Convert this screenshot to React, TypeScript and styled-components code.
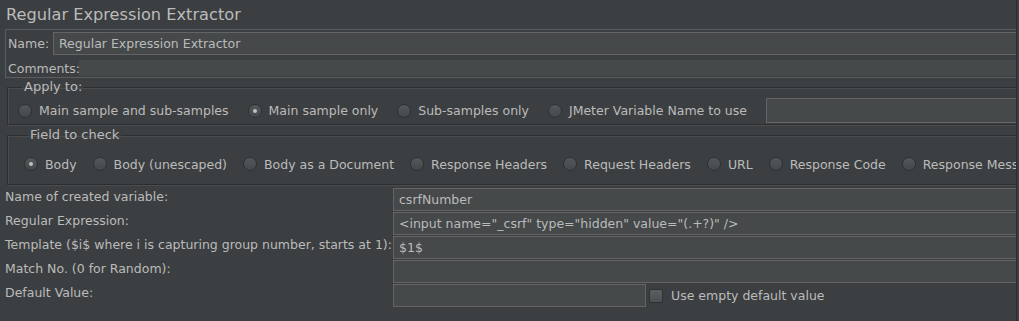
import React, { FC } from "react";
import styled, { createGlobalStyle } from "styled-components";

const GlobalStyle = createGlobalStyle`
  html, body {
    margin: 0;
    padding: 0;
    background: #3c3f41;
    overflow: hidden;
  }
  body {
    font-family: "DejaVu Sans", "Liberation Sans", sans-serif;
    font-size: 12.5px;
    color: #bbbbbb;
  }
`;

const Panel = styled.div`
  width: 1016px;
  height: 321px;
  overflow: hidden;
  border-right: 1px solid #2b2b2b;
`;

const Inner = styled.div`
  width: 1060px;
  padding-left: 5px;
  box-sizing: border-box;
`;

const Title = styled.div`
  height: 29px;
  line-height: 29px;
  font-size: 16.2px;
  padding-left: 1px;
  color: #bbbbbb;
`;

const NameBox = styled.div`
  border: 1px solid #5a5d5f;
  padding: 2px 0 1px 2px;
  display: flex;
  flex-direction: column;
  gap: 5px;
`;

const Row = styled.div`
  display: flex;
  align-items: center;
`;

const Label = styled.span<{ width?: number }>`
  flex: none;
  width: ${(p) => (p.width ? `${p.width}px` : "auto")};
  white-space: nowrap;
`;

const TextField = styled.div<{ width?: number; height?: number }>`
  flex: ${(p) => (p.width ? "none" : "1")};
  width: ${(p) => (p.width ? `${p.width}px` : "auto")};
  height: ${(p) => p.height ?? 23}px;
  box-sizing: border-box;
  background: #45494a;
  border: 1px solid #646464;
  padding: 0 5px;
  display: flex;
  align-items: center;
  white-space: nowrap;
  color: #bbbbbb;
`;

const CommentField = styled.div`
  flex: 1;
  height: 16px;
  background: #45494a;
`;

const Group = styled.fieldset<{ top: number; padTop: number; padBottom: number; padLeft: number }>`
  margin: ${(p) => p.top}px 0 0 2px;
  padding: ${(p) => p.padTop}px 0 ${(p) => p.padBottom}px ${(p) => p.padLeft}px;
  border: 1px solid #2c2e30;
  box-shadow: inset 1px 1px 0 #4a4d4f, 1px 1px 0 #4a4d4f;
  min-width: 0;
`;

const Legend = styled.legend`
  margin-left: 4px;
  padding: 0 2px;
  line-height: 14px;
  font-size: 13px;
`;

const Options = styled.div<{ height: number }>`
  display: flex;
  align-items: center;
  height: ${(p) => p.height}px;
  white-space: nowrap;
`;

const Option = styled.label<{ spacing: number }>`
  display: flex;
  align-items: center;
  gap: 7px;
  margin-right: ${(p) => p.spacing}px;
  flex: none;
`;

const Radio = styled.span<{ checked?: boolean }>`
  position: relative;
  width: 14px;
  height: 14px;
  box-sizing: border-box;
  border-radius: 50%;
  border: 1px solid #2e3133;
  background: linear-gradient(#53585a, #44484a);
  flex: none;
  &::after {
    content: "";
    display: ${(p) => (p.checked ? "block" : "none")};
    position: absolute;
    left: 4px;
    top: 4px;
    width: 4px;
    height: 4px;
    border-radius: 50%;
    background: #c0c0c0;
  }
`;

const Form = styled.div`
  display: grid;
  grid-template-columns: 388px 1fr;
  row-gap: 1px;
  margin-top: 3px;
`;

const FormLabel = styled.div`
  height: 23px;
  line-height: 17px;
  white-space: nowrap;
`;

const Checkbox = styled.span`
  width: 14px;
  height: 14px;
  box-sizing: border-box;
  border-radius: 2px;
  border: 1px solid #2e3133;
  background: linear-gradient(#5a5e60, #4c5052);
  flex: none;
`;

const CheckOption = styled.label`
  display: flex;
  align-items: center;
  gap: 8px;
  margin-left: 3px;
`;

interface RadioItem {
  label: string;
  checked?: boolean;
}

const applyOptions: RadioItem[] = [
  { label: "Main sample and sub-samples" },
  { label: "Main sample only", checked: true },
  { label: "Sub-samples only" },
  { label: "JMeter Variable Name to use" },
];

const fieldOptions: RadioItem[] = [
  { label: "Body", checked: true },
  { label: "Body (unescaped)" },
  { label: "Body as a Document" },
  { label: "Response Headers" },
  { label: "Request Headers" },
  { label: "URL" },
  { label: "Response Code" },
  { label: "Response Message" },
];

const rows = [
  { label: "Name of created variable:", value: "csrfNumber" },
  { label: "Regular Expression:", value: '<input name="_csrf" type="hidden" value="(.+?)" />' },
  { label: "Template ($i$ where i is capturing group number, starts at 1):", value: "$1$" },
  { label: "Match No. (0 for Random):", value: "" },
];

const RadioList: FC<{ items: RadioItem[]; spacing: number }> = ({ items, spacing }) => (
  <>
    {items.map((o) => (
      <Option key={o.label} spacing={spacing}>
        <Radio checked={o.checked} />
        {o.label}
      </Option>
    ))}
  </>
);

const App: FC = () => {
  return (
    <Panel>
      <GlobalStyle />
      <Inner>
        <Title>Regular Expression Extractor</Title>
        <NameBox>
          <Row>
            <Label width={45}>Name:</Label>
            <TextField>Regular Expression Extractor</TextField>
          </Row>
          <Row>
            <Label width={71}>Comments:</Label>
            <CommentField />
          </Row>
        </NameBox>
        <Group top={2} padTop={4} padBottom={1} padLeft={10}>
          <Legend>Apply to:</Legend>
          <Options height={25}>
            <RadioList items={applyOptions} spacing={19} />
            <TextField height={25} />
          </Options>
        </Group>
        <Group top={3} padTop={12} padBottom={10} padLeft={16}>
          <Legend>Field to check</Legend>
          <Options height={20}>
            <RadioList items={fieldOptions} spacing={16} />
          </Options>
        </Group>
        <Form>
          {rows.map((r) => (
            <React.Fragment key={r.label}>
              <FormLabel>{r.label}</FormLabel>
              <TextField>{r.value}</TextField>
            </React.Fragment>
          ))}
          <FormLabel>Default Value:</FormLabel>
          <Row>
            <TextField width={253} />
            <CheckOption>
              <Checkbox />
              Use empty default value
            </CheckOption>
          </Row>
        </Form>
      </Inner>
    </Panel>
  );
};

export default App;
